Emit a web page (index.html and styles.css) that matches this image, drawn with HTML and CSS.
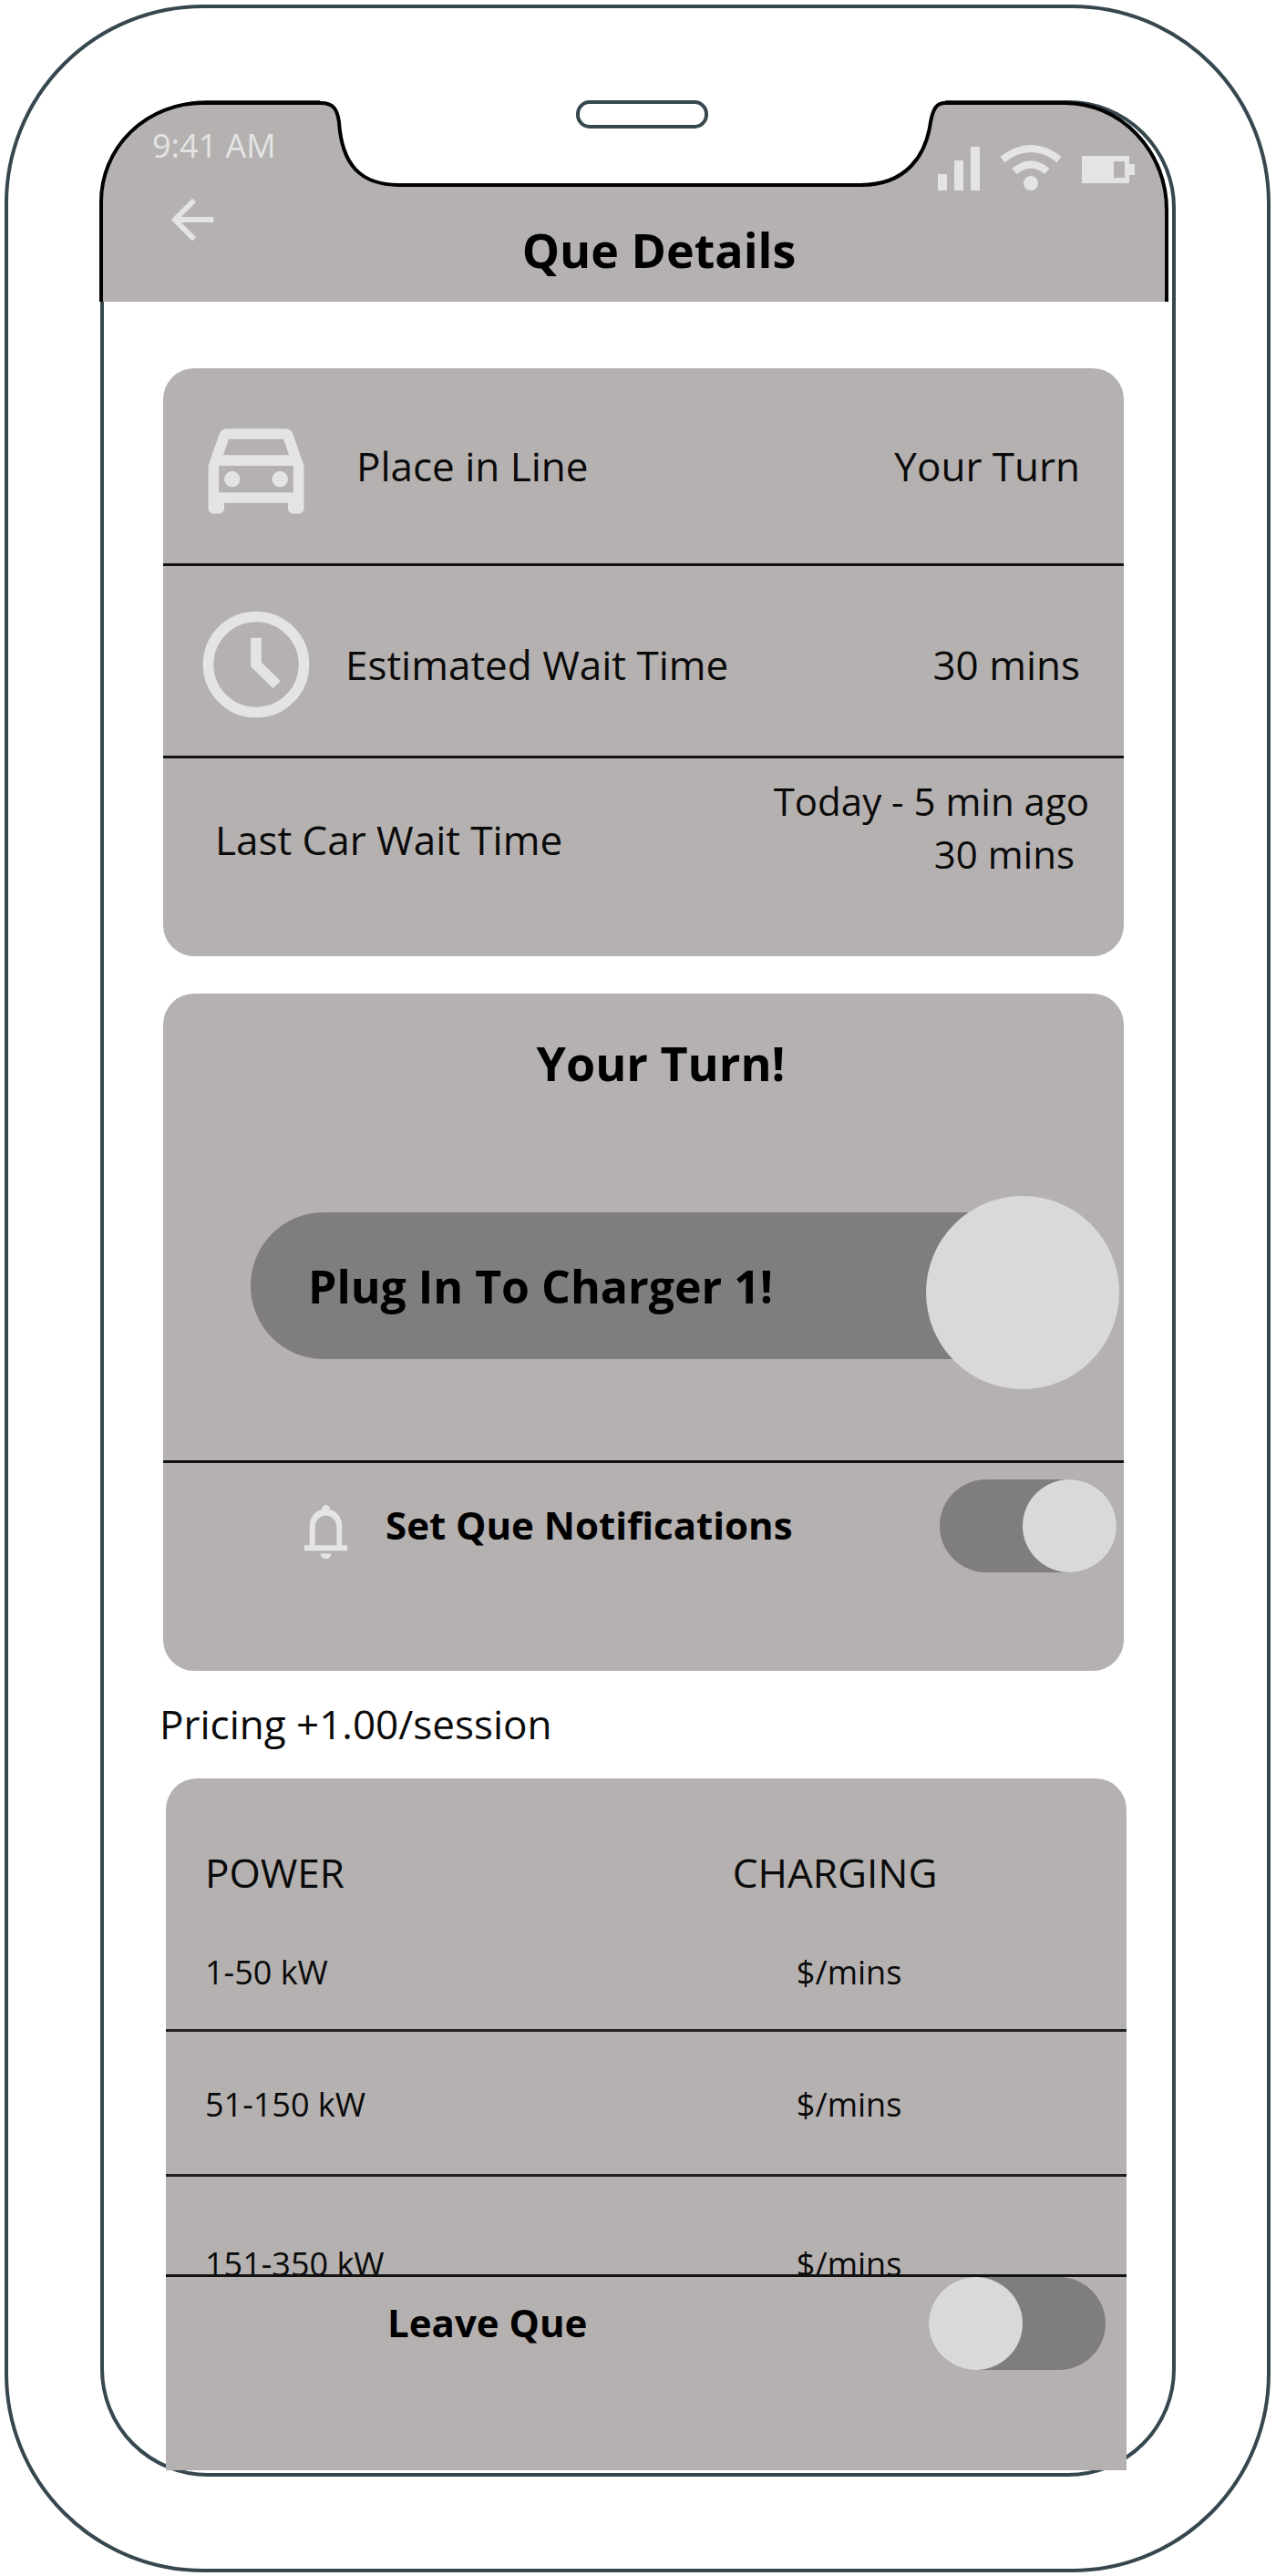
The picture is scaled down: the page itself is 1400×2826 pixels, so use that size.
FILE: index.html
```html
<!DOCTYPE html>
<html lang="en">
<head>
    <meta charset="UTF-8">
    <meta name="viewport" content="width=device-width, initial-scale=1.0">
    <title>Que Details</title>
    <link rel="stylesheet" href="styles.css">
</head>
<body>
    <div class="phone">
        <div class="screen">
            <header class="header">
                <!-- Notch, speaker and header background -->
                <svg class="notch" viewBox="0 0 1180 221" aria-hidden="true">
                    <rect x="241" y="-1" width="686" height="8" fill="#fff"/>
                    <path d="M1 221V111A111 108 0 0 1 112 3H242C256 3 260 10 262 24C265 70 285 93 328 93H834C885 93 906 60 911 24C914 8 918 3 927 3H1058A112 117 0 0 1 1170 120V221" fill="#b5b1b0" stroke="#000" stroke-width="4"/>
                    <rect x="524" y="2" width="141" height="27" rx="13" fill="#fff" stroke="#37474f" stroke-width="4"/>
                </svg>
                <div class="status-bar">
                    <span class="time">9:41 AM</span>
                    <div class="status-icons">
                        <svg width="46" height="50" viewBox="0 0 46 50" aria-hidden="true">
                            <path d="M0 32h10v18H0zM18 17h10v33H18zM36 2h10v48H36z"/>
                        </svg>
                        <svg width="70" height="50" viewBox="0 0 70 50" aria-hidden="true">
                            <path d="M4 16Q35-8 66 16M17 29Q35 14 53 29" fill="none" stroke="#e4e4e4" stroke-width="8"/>
                            <circle cx="35" cy="42" r="8"/>
                        </svg>
                        <svg width="58" height="50" viewBox="0 0 58 50" aria-hidden="true">
                            <path d="M0 12h52v9h6v12h-6v9H0zM35 18v18h12V18z" fill-rule="evenodd"/>
                        </svg>
                    </div>
                </div>
                <div class="title-bar">
                    <a class="back" href="#" aria-label="Back">
                        <svg width="70" height="70" viewBox="0 0 24 24" aria-hidden="true">
                            <path d="M20 11H7.83l5.59-5.59L12 4l-8 8 8 8 1.41-1.41L7.83 13H20z"/>
                        </svg>
                    </a>
                    <h1>Que Details</h1>
                </div>
            </header>

            <main>
                <section class="card">
                    <div class="row">
                        <svg class="row-icon" viewBox="0 0 24 24" aria-hidden="true">
                            <path d="M18.92 6.01C18.72 5.42 18.16 5 17.5 5h-11c-.66 0-1.21.42-1.42 1.01L3 12v8c0 .55.45 1 1 1h1c.55 0 1-.45 1-1v-1h12v1c0 .55.45 1 1 1h1c.55 0 1-.45 1-1v-8zM6.85 7h10.29l1.04 3H5.81zM19 17H5v-5h14z"/>
                            <circle cx="7.5" cy="14.5" r="1.5"/>
                            <circle cx="16.5" cy="14.5" r="1.5"/>
                        </svg>
                        <span class="label indent">Place in Line</span>
                        <span class="value">Your Turn</span>
                    </div>
                    <div class="row wait">
                        <svg class="row-icon" viewBox="0 0 24 24" aria-hidden="true">
                            <circle cx="12" cy="12" r="9" fill="none" stroke="#e4e4e4" stroke-width="2"/>
                            <path d="M11 7h2v4.6l3.6 3.5-1.4 1.4-4.2-4.1z"/>
                        </svg>
                        <span class="label">Estimated Wait Time</span>
                        <span class="value">30 mins</span>
                    </div>
                    <div class="row last-car">
                        <span class="label">Last Car Wait Time</span>
                        <p class="history">Today - 5 min ago<br><span class="history-time">30 mins</span></p>
                    </div>
                </section>

                <section class="card">
                    <div class="turn">
                        <h2>Your Turn!</h2>
                        <div class="slider">
                            <label for="plug">Plug In To Charger 1!</label>
                            <input type="checkbox" id="plug" checked>
                        </div>
                    </div>
                    <div class="switch-row notify">
                        <svg class="bell" viewBox="0 0 24 24" aria-hidden="true">
                            <path d="M18 17v-7c0-3.07-1.63-5.64-4.5-6.32V3.5a1.5 1.5 0 0 0-3 0v.18C7.64 4.36 6 6.92 6 10v7H4v2h16v-2zM16 17H8v-6.5C8 8.02 9.51 6 12 6s4 2.02 4 4.5zM12 22c1.1 0 2-.9 2-2h-4c0 1.1.9 2 2 2z"/>
                        </svg>
                        <label for="notifications">Set Que Notifications</label>
                        <input type="checkbox" class="switch" id="notifications" checked>
                    </div>
                </section>

                <p class="pricing">Pricing +1.00/session</p>

                <section class="price-card">
                    <div class="table-container">
                        <table>
                            <thead>
                                <tr>
                                    <th>POWER</th>
                                    <th>CHARGING</th>
                                </tr>
                            </thead>
                            <tbody>
                                <tr class="first">
                                    <td>1-50 kW</td>
                                    <td>$/mins</td>
                                </tr>
                                <tr>
                                    <td>51-150 kW</td>
                                    <td>$/mins</td>
                                </tr>
                                <tr class="last">
                                    <td>151-350 kW</td>
                                    <td>$/mins</td>
                                </tr>
                            </tbody>
                        </table>
                    </div>
                    <div class="switch-row leave">
                        <label for="leave">Leave Que</label>
                        <input type="checkbox" class="switch" id="leave">
                    </div>
                </section>
            </main>
        </div>
    </div>
</body>
</html>
```
FILE: styles.css
```css
* {
    box-sizing: border-box;
}

body {
    margin: 0;
    background-color: #fff;
    color: #0a0a0a;
    font-family: 'Open Sans', sans-serif;
    font-size: 44px;
    font-weight: 500;
    line-height: 60px;
}

h1, h2, p {
    margin: 0;
}

h1, h2 {
    font-size: 52px;
    font-weight: 700;
    color: #000;
}

svg {
    display: block;
    flex: none;
    fill: #e4e4e4;
}

.phone {
    margin: 5px 6px 6px 5px;
    padding: 101px 100px 101px 101px;
    border: 4px solid #37474f;
    border-radius: 218px;
}

.screen {
    border: 4px solid #37474f;
    border-radius: 118px;
    padding-bottom: 3px;
}

/* Header */
.header {
    position: relative;
    height: 217px;
}

.notch {
    position: absolute;
    top: -4px;
    left: -4px;
    width: calc(100% + 8px);
    overflow: visible;
}

.status-bar {
    position: relative;
    display: flex;
    justify-content: space-between;
    height: 92px;
    padding: 16px 41px 0 53px;
}

.time {
    font-size: 36px;
    font-weight: 400;
    color: #e4e4e4;
}

.status-icons {
    display: flex;
    gap: 21px;
    padding-top: 29px;
}

.title-bar {
    position: relative;
    display: flex;
    padding: 0 86px 0 62px;
}

.title-bar h1 {
    flex: 1;
    padding-top: 38px;
    text-align: center;
}

/* Cards */
main {
    padding: 73px 53px 0 65px;
}

.card {
    margin-bottom: 41px;
    background-color: #b5b1b0;
    border-radius: 34px;
}

.row {
    display: flex;
    align-items: center;
    height: 217px;
    padding: 0 48px 0 32px;
    border-bottom: 3px solid #111;
}

.row-icon {
    width: 140px;
    height: 140px;
    margin-right: 28px;
}

.indent {
    padding-left: 12px;
}

.value {
    margin-left: auto;
}

.wait {
    height: 211px;
    padding-top: 8px;
}

.last-car {
    align-items: flex-start;
    height: 217px;
    padding: 18px 38px 0 57px;
    border-bottom: none;
}

.last-car .label {
    padding-top: 41px;
}

.history {
    margin-left: auto;
    font-size: 42px;
    font-weight: 400;
    line-height: 58px;
    text-align: right;
}

.history-time {
    padding-right: 16px;
}

.turn {
    height: 515px;
    padding: 46px 33px 0 96px;
    border-bottom: 3px solid #111;
}

.turn h2 {
    margin-right: 25px;
    text-align: center;
}

/* Slider with an oversized knob */
.slider {
    display: flex;
    align-items: center;
    height: 161px;
    margin-top: 134px;
    padding-left: 63px;
    background-color: #807d7d;
    border-radius: 80px;
    color: #000;
    font-size: 50px;
    font-weight: 700;
}

.slider input {
    appearance: none;
    flex: none;
    width: 212px;
    height: 212px;
    margin: 14px -28px 0 auto;
    background-color: #d9d9d9;
    border-radius: 50%;
}

.switch-row {
    display: flex;
    align-items: flex-start;
    color: #000;
    font-size: 42px;
    font-weight: 700;
}

.switch-row label {
    padding-top: 20px;
}

.notify {
    height: 228px;
    padding: 18px 8px 0 143px;
}

.bell {
    width: 71px;
    height: 71px;
    margin: 22px 30px 0 0;
}

.switch {
    appearance: none;
    width: 194px;
    height: 102px;
    margin: 0 0 0 auto;
    background-color: #807d7d;
    border-radius: 51px;
}

.switch::before {
    content: "";
    display: block;
    width: 103px;
    height: 102px;
    background-color: #d9d9d9;
    border-radius: 50%;
}

.switch:checked::before {
    margin-left: auto;
}

/* Pricing */
.pricing {
    margin: -13px 0 30px -4px;
}

.price-card {
    margin: 0 -3px 0 3px;
    background-color: #b5b1b0;
    border-radius: 34px 34px 0 0;
}

.table-container {
    height: 544px;
    overflow: hidden;
}

table {
    width: 100%;
    border-collapse: collapse;
}

th, td {
    padding: 50px 0 46px 43px;
    text-align: left;
    border-bottom: 3px solid #222;
}

th {
    padding-top: 73px;
    padding-bottom: 0;
    border-bottom: none;
    font-weight: 500;
}

th:first-child {
    width: 59%;
}

th + th {
    padding-left: 0;
}

td {
    font-size: 36px;
    font-weight: 400;
}

td + td {
    padding-left: 70px;
}

.first td {
    padding-bottom: 32px;
}

.last td {
    padding-top: 66px;
}

.leave {
    height: 215px;
    padding-right: 23px;
    padding-left: 243px;
    border-top: 3px solid #111;
}
```
